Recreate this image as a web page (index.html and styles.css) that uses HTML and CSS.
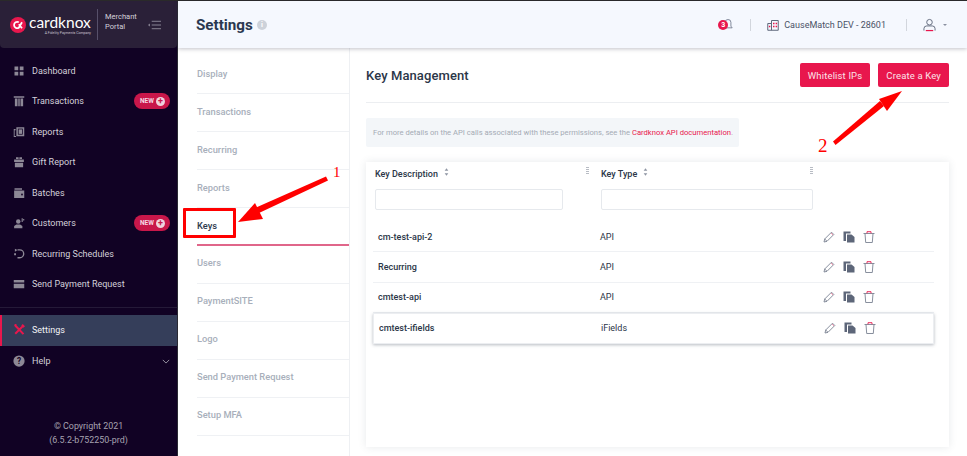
FILE: index.html
```html
<!DOCTYPE html>
<html lang="en">
<head>
<meta charset="utf-8">
<title>Key Management</title>
<link rel="stylesheet" href="styles.css">
</head>
<body>
<div class="app">
  <aside class="side">
    <div class="brand">
      <svg class="brand-mark" viewBox="0 0 20 20" width="16" height="16"><circle cx="10" cy="10" r="10" fill="#e8174d"/><path d="M11 6.500 A4 4 0 1 0 11 13.500 L15 6.500 M11 9 L15 14" fill="none" stroke="#fff" stroke-width="2.200"/></svg>
      <div class="brand-word"><span class="brand-name">cardknox</span><span class="brand-sub">A Fidelity Payments Company</span></div>
      <div class="brand-portal">Merchant<br>Portal</div>
      <svg class="brand-menu" viewBox="0 0 14 10" width="13" height="10"><path d="M4 1h10M4 5h10M4 9h10" stroke="#8f8a9a" stroke-width="1"/><path d="M0 5l2-1.500v3z" fill="#8f8a9a"/></svg>
    </div>
    <nav class="menu">
      <a class="item"><svg class="ic" viewBox="0 0 16 16"><path d="M2 2h5v5H2zM9 2h5v5H9zM2 9h5v5H2zM9 9h5v5H9z"/></svg><span>Dashboard</span></a>
      <a class="item"><svg class="ic" viewBox="0 0 16 16"><path d="M1 1.500h14v2H1zM2.500 4.500h3.500V15H2.500zM7 4.500h2V15H7zM10 4.500h3.500V15H10z"/></svg><span>Transactions</span><b class="new">NEW<i>+</i></b></a>
      <a class="item"><svg class="ic" viewBox="0 0 16 16"><path d="M4.500 1.500h10.500v12H4.500zM1 4h2.500v1.500H2.200v7.800H4V14.500H1z"/><path d="M6.500 3.500h6.500v8H6.500z" fill="#110224"/><path d="M7.500 4.500h4.500v6H7.500z"/></svg><span>Reports</span></a>
      <a class="item"><svg class="ic" viewBox="0 0 16 16"><path d="M1.500 4.500h13V8h-13zM2.500 9h11v6h-11zM4 1.500h3.500v2.500H4zM8.500 1.500H12v2.500H8.500z"/></svg><span>Gift Report</span></a>
      <a class="item"><svg class="ic" viewBox="0 0 16 16"><path d="M2 1.500h10v2H2zM1.500 4.500H15v10H1.500z"/><circle cx="12" cy="10" r="1.200" fill="#110224"/></svg><span>Batches</span></a>
      <a class="item"><svg class="ic" viewBox="0 0 16 16"><circle cx="7" cy="6" r="3"/><path d="M1.500 15v-3l3-2h5l3 2v3zM11.500 1.500h1.500v5h-1.500zM13.500 2.500H15v2h-1.500z"/></svg><span>Customers</span><b class="new">NEW<i>+</i></b></a>
      <a class="item"><svg class="ic ic-line" viewBox="0 0 16 16"><path d="M6 2.500h3a5.200 5.200 0 1 1 0 10.500H6"/><path class="dot" d="M2.500 1l3.500 1.500-3.500 2.500zM1.500 7h2.500v2.500H1.500z"/></svg><span>Recurring Schedules</span></a>
      <a class="item"><svg class="ic" viewBox="0 0 16 16"><path d="M1 2.500h14v3.500H1zM1 7.500h14v6H1z"/></svg><span>Send Payment Request</span></a>
      <hr class="rule">
      <a class="item active"><svg class="ic ic-x" viewBox="0 0 16 16"><path d="M3 2l11 11.500M13.500 2.500L3 13M2 1l2.500 1M12 1l3 3"/></svg><span>Settings</span></a>
      <a class="item"><svg class="ic" viewBox="0 0 16 16"><circle cx="8" cy="8" r="7.500"/><text x="8" y="12" text-anchor="middle" class="ic-q">?</text></svg><span>Help</span><svg class="chev" viewBox="0 0 10 6" width="8" height="5"><path d="M1 1l4 4 4-4" fill="none" stroke="#9b97a5" stroke-width="1.200"/></svg></a>
    </nav>
    <footer class="copy">© Copyright 2021<br>(6.5.2-b752250-prd)</footer>
  </aside>
  <div class="body">
    <header class="top">
      <h1>Settings</h1><span class="info">i</span>
      <div class="top-right">
        <span class="bell"><b>3</b><svg viewBox="0 0 12 14" width="10" height="13"><path d="M6 1a3.500 3.500 0 0 1 3.500 3.500V9l1.500 2H1l1.500-2V4.500A3.500 3.500 0 0 1 6 1z" fill="none" stroke="#6b7488" stroke-width="1"/></svg></span>
        <span class="sep"></span>
        <svg class="bld" viewBox="0 0 16 16" width="12" height="12"><path d="M1 6h5v9H1zM6 2h9v13H6z" fill="none" stroke="#5d6679" stroke-width="1.300"/><path d="M8 5h2v2H8zM11.500 5h2v2h-2zM8 9h2v2H8zM11.500 9h2v2h-2zM2.500 9h2v2h-2z" fill="#e8174d"/></svg>
        <span class="acct">CauseMatch DEV - 28601</span>
        <span class="sep"></span>
        <svg class="user" viewBox="0 0 14 14" width="13" height="14"><circle cx="7" cy="4" r="3" fill="none" stroke="#5d6679"/><path d="M1 13v-2a3 3 0 0 1 3-3h6a3 3 0 0 1 3 3v2" fill="none" stroke="#5d6679"/><path d="M3 13h8" stroke="#e8174d" stroke-width="1.300"/></svg>
        <span class="caret"></span>
      </div>
    </header>
    <div class="content">
      <nav class="sub">
        <a>Display</a><a>Transactions</a><a>Recurring</a><a>Reports</a><a class="on">Keys</a><a>Users</a><a>PaymentSITE</a><a>Logo</a><a>Send Payment Request</a><a>Setup MFA</a>
      </nav>
      <main class="main">
        <div class="main-head">
          <h2>Key Management</h2>
          <div class="btns"><button>Whitelist IPs</button><button>Create a Key</button></div>
        </div>
        <p class="note">For more details on the API calls associated with these permissions, see the <a>Cardknox API documentation</a>.</p>
        <section class="card">
          <div class="grid hdr">
            <div class="col"><span>Key Description</span><svg class="sort" viewBox="0 0 6 9" width="5" height="8"><path d="M3 0l2.200 3H.8zM3 9L.8 6h4.400z"/></svg><em class="grip"></em><div class="filter"></div></div>
            <div class="col"><span>Key Type</span><svg class="sort" viewBox="0 0 6 9" width="5" height="8"><path d="M3 0l2.200 3H.8zM3 9L.8 6h4.400z"/></svg><em class="grip"></em><div class="filter"></div></div>
          </div>
          <div class="row"><span class="d">cm-test-api-2</span><span class="t">API</span><span class="acts"><svg viewBox="0 0 12 12"><path class="p" d="M1 11l.7-3L8.500 1.200l2.300 2.300L4 10.300zM1.700 8l2.300 2.300"/><path class="r" d="M8.500 2.500l1 1"/></svg><svg viewBox="0 0 12 12"><path class="c" d="M.5 .5h7V2.500H3V10H.5zM4 3.500h4.500L11.500 6v5.500H4z"/></svg><svg viewBox="0 0 12 12"><path class="p" d="M.5 2.500h11M2 2.500l.7 9h6.600l.7-9"/><path class="r" d="M4 2.300V.7h4v1.600"/></svg></span></div>
          <div class="row"><span class="d">Recurring</span><span class="t">API</span><span class="acts"><svg viewBox="0 0 12 12"><path class="p" d="M1 11l.7-3L8.500 1.200l2.300 2.300L4 10.300zM1.700 8l2.300 2.300"/><path class="r" d="M8.500 2.500l1 1"/></svg><svg viewBox="0 0 12 12"><path class="c" d="M.5 .5h7V2.500H3V10H.5zM4 3.500h4.500L11.500 6v5.500H4z"/></svg><svg viewBox="0 0 12 12"><path class="p" d="M.5 2.500h11M2 2.500l.7 9h6.600l.7-9"/><path class="r" d="M4 2.300V.7h4v1.600"/></svg></span></div>
          <div class="row"><span class="d">cmtest-api</span><span class="t">API</span><span class="acts"><svg viewBox="0 0 12 12"><path class="p" d="M1 11l.7-3L8.500 1.200l2.300 2.300L4 10.300zM1.700 8l2.300 2.300"/><path class="r" d="M8.500 2.500l1 1"/></svg><svg viewBox="0 0 12 12"><path class="c" d="M.5 .5h7V2.500H3V10H.5zM4 3.500h4.500L11.500 6v5.500H4z"/></svg><svg viewBox="0 0 12 12"><path class="p" d="M.5 2.500h11M2 2.500l.7 9h6.600l.7-9"/><path class="r" d="M4 2.300V.7h4v1.600"/></svg></span></div>
          <div class="row hover"><span class="d">cmtest-ifields</span><span class="t">iFields</span><span class="acts"><svg viewBox="0 0 12 12"><path class="p" d="M1 11l.7-3L8.500 1.200l2.300 2.300L4 10.300zM1.700 8l2.300 2.300"/><path class="r" d="M8.500 2.500l1 1"/></svg><svg viewBox="0 0 12 12"><path class="c" d="M.5 .5h7V2.500H3V10H.5zM4 3.500h4.500L11.500 6v5.500H4z"/></svg><svg viewBox="0 0 12 12"><path class="p" d="M.5 2.500h11M2 2.500l.7 9h6.600l.7-9"/><path class="r" d="M4 2.300V.7h4v1.600"/></svg></span></div>
        </section>
      </main>
    </div>
  </div>
</div>
<div class="box-red"></div>
<svg class="notes" viewBox="0 0 967 456" width="967" height="456">
  <path d="M326 176.500 L328 180.500 L259 213 L255 208z" fill="#f00"/>
  <path d="M238 222 L255 203 L263 219z" fill="#f00"/>
  <path d="M833 141.500 L835.500 145 L884 106 L880 101z" fill="#f00"/>
  <path d="M902 91 L879 99 L887 111z" fill="#f00"/>
  <text x="333" y="177" class="num">1</text>
  <text x="818" y="152" class="num num2">2</text>
</svg>
</body>
</html>
```

FILE: styles.css
```css
* { box-sizing: border-box; }
html, body { margin: 0; height: 456px; overflow: hidden; }
body { font-family: Roboto, "Liberation Sans", sans-serif; background: #fff; position: relative; color: #2b3648; }
.app { display: flex; height: 456px; border-top: 1px solid #2a2a2a; }
.side { width: 178px; flex: none; background: #110224; border-right: 1px solid #2a2a33; display: flex; flex-direction: column; color: #cfcbd6; }
.brand { height: 47px; background: #2a2038; border-radius: 0 0 4px 4px; display: flex; align-items: center; padding-left: 10px; flex: none; }
.brand-mark { flex: none; }
.brand-word { display: flex; flex-direction: column; margin-left: 3px; width: 62px; }
.brand-name { font: 400 15.500px/16px Lato, sans-serif; color: #fff; white-space: nowrap; }
.brand-sub { font-size: 3.500px; line-height: 5px; margin-top: 1px; color: #c9c5d0; text-align: right; white-space: nowrap; }
.brand-portal { font-size: 7.500px; line-height: 10px; color: #d5d2db; margin-left: 6px; border-left: 1px solid #57506a; padding: 3px 0 3px 7px; height: 25px; box-sizing: content-box; width: 43px; }
.brand-menu { flex: none; }
.menu { padding-top: 7.500px; display: flex; flex-direction: column; }
.item { display: flex; align-items: center; height: 30.500px; padding-left: 13px; font-size: 9px; color: #d4d1da; position: relative; flex: none; }
.ic { width: 12px; height: 12px; fill: #8d8896; margin-right: 7px; flex: none; }
.ic-line { fill: none; stroke: #8d8896; stroke-width: 1.800; }
.ic-line .dot { fill: #8d8896; stroke: none; }
.ic-x { fill: none; stroke: #e8174d; stroke-width: 2.800; }
.ic-q { font: 700 11px Roboto, sans-serif; fill: #110224; }
.new { position: absolute; left: 134px; top: 7px; width: 36px; height: 16px; border-radius: 8px; background: #c8174a; color: #f4d8e2; font-size: 6.500px; font-weight: 700; display: flex; align-items: center; padding-left: 6px; }
.new i { font-style: normal; width: 9px; height: 9px; margin-left: 2px; border-radius: 50%; background: #efd3dd; color: #c8174a; font-size: 9px; line-height: 9px; text-align: center; }
.rule { width: 100%; border: 0; border-top: 1px solid #251a38; margin: 7.500px 0 7px; height: 0; flex: none; }
.active { background: #353e5a; color: #f2f2f5; border-left: 2px solid #e8174d; padding-left: 11px; }
.chev { position: absolute; left: 162px; top: 13px; }
.copy { margin-top: auto; padding-bottom: 9px; font-size: 8.900px; line-height: 13.500px; text-align: center; color: #a7a3b0; }
.body { flex: 1; min-width: 0; display: flex; flex-direction: column; }
.top { height: 47px; flex: none; background: #f5f8fe; box-shadow: 0 1px 4px rgba(40,40,60,.28); display: flex; align-items: center; padding-left: 18px; position: relative; }
.top h1 { margin: 0; font-size: 15.200px; font-weight: 700; color: #2a3850; }
.info { width: 10px; height: 10px; margin-left: 4px; border-radius: 50%; background: #cdd2da; color: #fff; font: 700 7px/10px Roboto, sans-serif; text-align: center; }
.top-right { margin-left: auto; display: flex; align-items: center; padding-right: 20px; }
.bell { display: flex; align-items: center; width: 15px; position: relative; }
.bell b { width: 10px; height: 10px; border-radius: 50%; background: #e8174d; color: #fff; font-size: 7px; line-height: 10px; text-align: center; z-index: 1; flex: none; }
.bell svg { margin-left: -5px; flex: none; }
.sep { width: 1px; height: 12px; background: #d2d6dd; margin: 0 16px 0 17px; flex: none; }
.acct { font-size: 9px; color: #4a5266; margin: 0 3px 0 5px; }
.caret { width: 0; height: 0; border: 2px solid transparent; border-top: 2.500px solid #8a90a0; margin: 3px 0 0 7px; }
.bld { flex: none; }
.content { flex: 1; display: flex; min-height: 0; }
.sub { width: 172px; flex: none; padding: 8px 0 0 19px; display: flex; flex-direction: column; border-right: 1px solid #eef0f3; }
.sub a { height: 38px; flex: none; display: flex; align-items: center; padding-bottom: 2.500px; font-size: 9.300px; font-weight: 500; color: #a8afbb; border-bottom: 1px solid #eff1f4; }
.sub a.on { color: #2e3a4e; height: 37.500px; padding-bottom: 0; border-bottom: 2px solid #e0668a; }
.main { flex: 1; padding: 0 18px 0 16px; min-width: 0; display: flex; flex-direction: column; }
.main-head { display: flex; justify-content: space-between; align-items: flex-start; padding-top: 15px; height: 55px; border-bottom: 1px solid #eceef1; flex: none; }
.main-head h2 { margin: 5px 0 0; font-size: 13px; font-weight: 500; color: #2b3648; letter-spacing: .1px; }
.btns { display: flex; gap: 8px; }
.btns button { height: 24px; padding: 0 8px; border: 0; border-radius: 2px; background: #e8174d; color: #fbe3ea; font: 400 9.500px Roboto, sans-serif; letter-spacing: .15px; }
.note { margin: 15px 0 0; width: 373px; height: 29px; padding: 0 7px; background: #f3f6f9; border-radius: 2px; font-size: 7.630px; line-height: 29px; color: #a5abb5; white-space: nowrap; flex: none; }
.note a { color: #e8174d; }
.card { margin-top: 15px; height: 285px; background: #fff; box-shadow: 0 0 8px rgba(60,70,90,.12); flex: none; padding: 0 15px 0 7px; }
.grid { display: grid; grid-template-columns: 226px 212px; height: 60px; margin-left: 2px; }
.col { position: relative; padding-top: 6px; font-size: 9px; font-weight: 500; color: #2b3648; display: block; }
.sort { fill: #8e95a3; margin-left: 6px; vertical-align: 1px; }
.grip { position: absolute; right: 12px; top: 5px; width: 3px; height: 8px; background: repeating-linear-gradient(#b8bcc4 0 1px, transparent 1px 2px); }
.filter { position: absolute; left: 0; top: 27px; right: 38px; height: 21px; border: 1px solid #e6e9ed; border-radius: 2px; background: #fff; }
.col + .col .filter { right: 0; }
.col + .col .grip { right: 0; }
.row { display: flex; align-items: center; height: 30.400px; font-size: 9px; color: #2b3648; border-bottom: 1px solid #eff1f4; position: relative; }
.row .d { width: 227px; padding-left: 5px; font-weight: 500; }
.row .t { width: 223px; }
.row.hover { box-shadow: 0 1px 3px rgba(50,60,80,.35); border: 1px solid #eceef1; }
.acts { display: flex; gap: 8px; }
.acts svg { width: 12px; height: 12px; display: block; }
.p { fill: none; stroke: #7b8292; stroke-width: .9; }
.r { fill: none; stroke: #e8174d; stroke-width: .9; }
.c { fill: #5d6679; }
.box-red { position: absolute; left: 183px; top: 208px; width: 53px; height: 30px; border: 3px solid #f00; border-radius: 1px; }
.notes { position: absolute; left: 0; top: 0; pointer-events: none; }
.num { font: 400 15px "Liberation Serif", serif; fill: #f00; }
.num2 { font-size: 19px; }
```
